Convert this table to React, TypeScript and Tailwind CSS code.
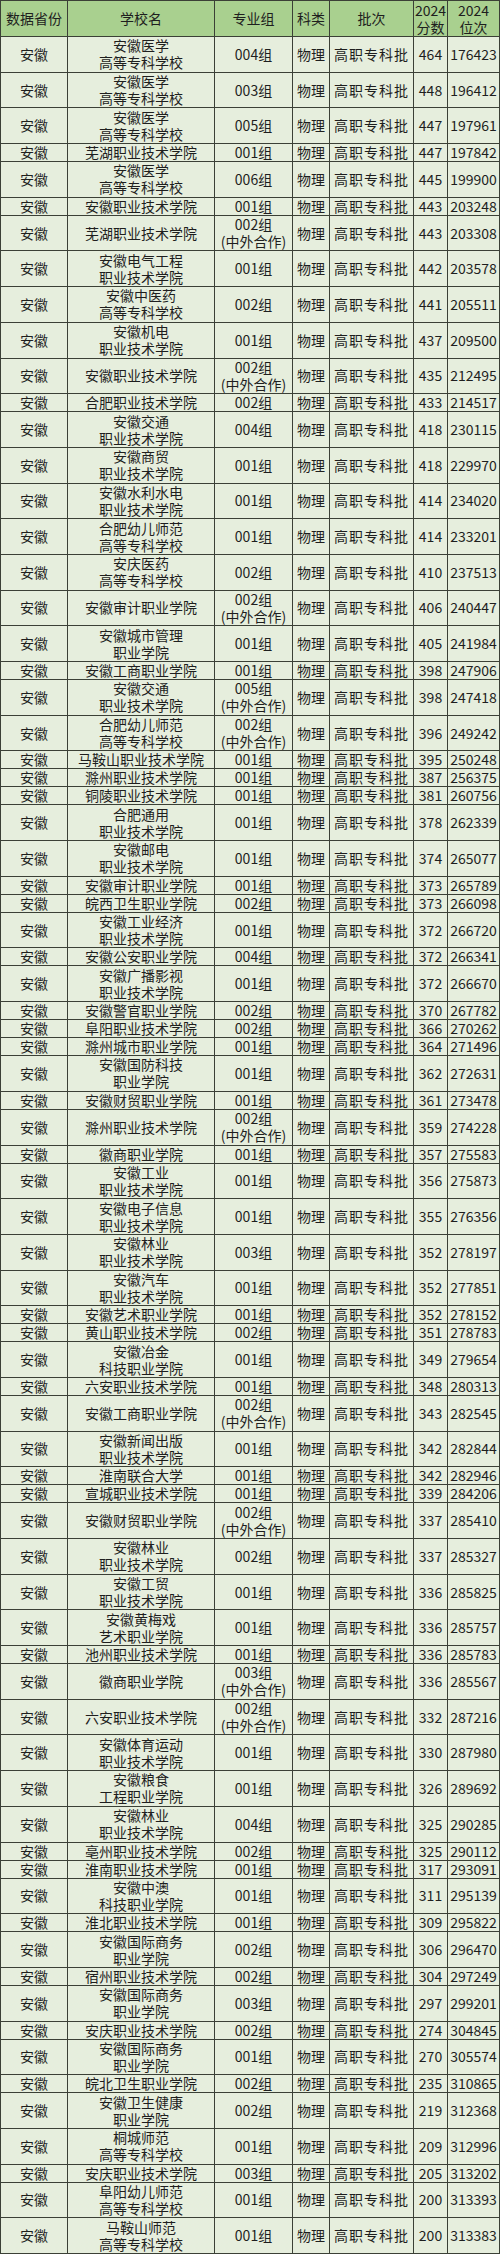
import React from "react";

type Row = [string, string, number, number];

// [学校名, 专业组, 分数, 位次]; "|" splits a cell into two lines
const rows: Row[] = [
  ["安徽医学|高等专科学校", "004组", 464, 176423],
  ["安徽医学|高等专科学校", "003组", 448, 196412],
  ["安徽医学|高等专科学校", "005组", 447, 197961],
  ["芜湖职业技术学院", "001组", 447, 197842],
  ["安徽医学|高等专科学校", "006组", 445, 199900],
  ["安徽职业技术学院", "001组", 443, 203248],
  ["芜湖职业技术学院", "002组|(中外合作)", 443, 203308],
  ["安徽电气工程|职业技术学院", "001组", 442, 203578],
  ["安徽中医药|高等专科学校", "002组", 441, 205511],
  ["安徽机电|职业技术学院", "001组", 437, 209500],
  ["安徽职业技术学院", "002组|(中外合作)", 435, 212495],
  ["合肥职业技术学院", "002组", 433, 214517],
  ["安徽交通|职业技术学院", "004组", 418, 230115],
  ["安徽商贸|职业技术学院", "001组", 418, 229970],
  ["安徽水利水电|职业技术学院", "001组", 414, 234020],
  ["合肥幼儿师范|高等专科学校", "001组", 414, 233201],
  ["安庆医药|高等专科学校", "002组", 410, 237513],
  ["安徽审计职业学院", "002组|(中外合作)", 406, 240447],
  ["安徽城市管理|职业学院", "001组", 405, 241984],
  ["安徽工商职业学院", "001组", 398, 247906],
  ["安徽交通|职业技术学院", "005组|(中外合作)", 398, 247418],
  ["合肥幼儿师范|高等专科学校", "002组|(中外合作)", 396, 249242],
  ["马鞍山职业技术学院", "001组", 395, 250248],
  ["滁州职业技术学院", "001组", 387, 256375],
  ["铜陵职业技术学院", "001组", 381, 260756],
  ["合肥通用|职业技术学院", "001组", 378, 262339],
  ["安徽邮电|职业技术学院", "001组", 374, 265077],
  ["安徽审计职业学院", "001组", 373, 265789],
  ["皖西卫生职业学院", "002组", 373, 266098],
  ["安徽工业经济|职业技术学院", "001组", 372, 266720],
  ["安徽公安职业学院", "004组", 372, 266341],
  ["安徽广播影视|职业技术学院", "001组", 372, 266670],
  ["安徽警官职业学院", "002组", 370, 267782],
  ["阜阳职业技术学院", "002组", 366, 270262],
  ["滁州城市职业学院", "001组", 364, 271496],
  ["安徽国防科技|职业学院", "001组", 362, 272631],
  ["安徽财贸职业学院", "001组", 361, 273478],
  ["滁州职业技术学院", "002组|(中外合作)", 359, 274228],
  ["徽商职业学院", "001组", 357, 275583],
  ["安徽工业|职业技术学院", "001组", 356, 275873],
  ["安徽电子信息|职业技术学院", "001组", 355, 276356],
  ["安徽林业|职业技术学院", "003组", 352, 278197],
  ["安徽汽车|职业技术学院", "001组", 352, 277851],
  ["安徽艺术职业学院", "001组", 352, 278152],
  ["黄山职业技术学院", "002组", 351, 278783],
  ["安徽冶金|科技职业学院", "001组", 349, 279654],
  ["六安职业技术学院", "001组", 348, 280313],
  ["安徽工商职业学院", "002组|(中外合作)", 343, 282545],
  ["安徽新闻出版|职业技术学院", "001组", 342, 282844],
  ["淮南联合大学", "001组", 342, 282946],
  ["宣城职业技术学院", "001组", 339, 284206],
  ["安徽财贸职业学院", "002组|(中外合作)", 337, 285410],
  ["安徽林业|职业技术学院", "002组", 337, 285327],
  ["安徽工贸|职业技术学院", "001组", 336, 285825],
  ["安徽黄梅戏|艺术职业学院", "001组", 336, 285757],
  ["池州职业技术学院", "001组", 336, 285783],
  ["徽商职业学院", "003组|(中外合作)", 336, 285567],
  ["六安职业技术学院", "002组|(中外合作)", 332, 287216],
  ["安徽体育运动|职业技术学院", "001组", 330, 287980],
  ["安徽粮食|工程职业学院", "001组", 326, 289692],
  ["安徽林业|职业技术学院", "004组", 325, 290285],
  ["亳州职业技术学院", "002组", 325, 290112],
  ["淮南职业技术学院", "001组", 317, 293091],
  ["安徽中澳|科技职业学院", "001组", 311, 295139],
  ["淮北职业技术学院", "001组", 309, 295822],
  ["安徽国际商务|职业学院", "002组", 306, 296470],
  ["宿州职业技术学院", "002组", 304, 297249],
  ["安徽国际商务|职业学院", "003组", 297, 299201],
  ["安庆职业技术学院", "002组", 274, 304845],
  ["安徽国际商务|职业学院", "001组", 270, 305574],
  ["皖北卫生职业学院", "002组", 235, 310865],
  ["安徽卫生健康|职业学院", "002组", 219, 312368],
  ["桐城师范|高等专科学校", "001组", 209, 312996],
  ["安庆职业技术学院", "003组", 205, 313202],
  ["阜阳幼儿师范|高等专科学校", "001组", 200, 313393],
  ["马鞍山师范|高等专科学校", "001组", 200, 313383],
];

const cols = "grid grid-cols-[67px_147px_78px_37px_84px_34px_52px]";
const cell =
  "flex flex-col items-center justify-center text-center border-r border-b border-[#3b4036] leading-[17px] whitespace-nowrap";

function Lines({ text }: { text: string }) {
  return (
    <>
      {text.split("|").map((t) => (
        <span key={t}>{t}</span>
      ))}
    </>
  );
}

export default function App() {
  return (
    <div
      className="w-[500px] bg-[#e6eedd] text-[14px] text-[#1e1e1e] border-l border-t border-[#3b4036]"
      style={{ fontFamily: '"Noto Sans CJK SC", "Noto Sans", sans-serif' }}
    >
      <div className={`${cols} h-[36px] bg-[#a9d08f]`}>
        <div className={cell}>数据省份</div>
        <div className={cell}>学校名</div>
        <div className={cell}>专业组</div>
        <div className={cell}>科类</div>
        <div className={cell}>批次</div>
        <div className={cell}>
          <span>2024</span>
          <span>分数</span>
        </div>
        <div className={cell}>
          <span>2024</span>
          <span>位次</span>
        </div>
      </div>
      {rows.map(([name, group, score, rank], i) => {
        const tall = name.includes("|") || group.includes("|");
        return (
          <div key={i} className={`${cols} ${tall ? "h-[35.7px]" : "h-[18px]"}`}>
            <div className={cell}>安徽</div>
            <div className={cell}>
              <Lines text={name} />
            </div>
            <div className={cell}>
              <Lines text={group} />
            </div>
            <div className={cell}>物理</div>
            <div className={`${cell} tracking-[1px]`}>高职专科批</div>
            <div className={cell}>{score}</div>
            <div className={cell}>{rank}</div>
          </div>
        );
      })}
    </div>
  );
}
